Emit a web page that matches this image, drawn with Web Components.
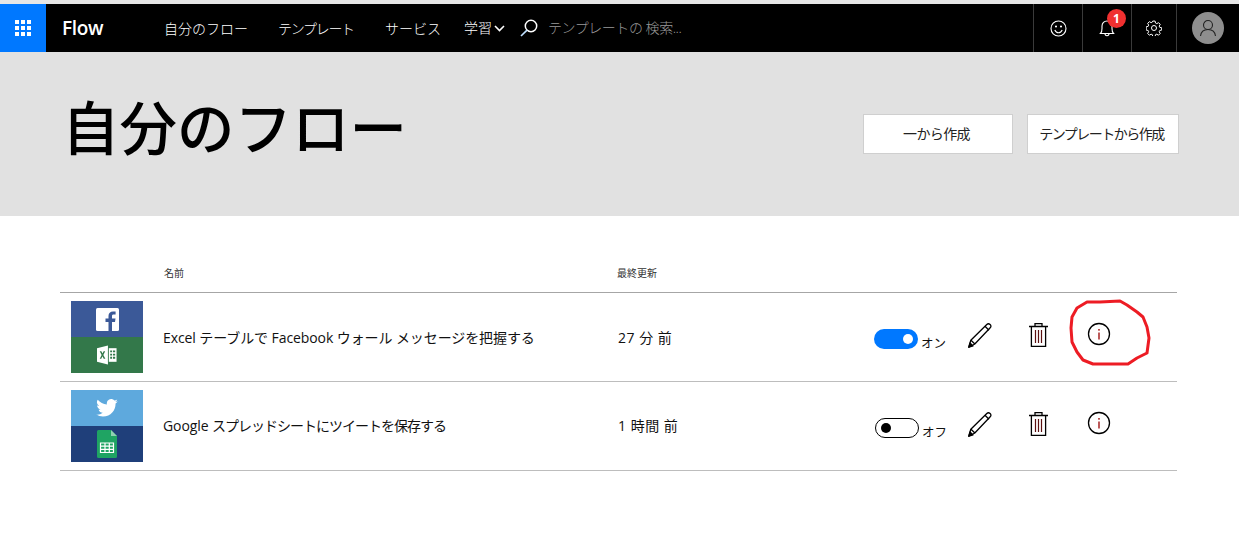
<!DOCTYPE html>
<html lang="ja"><head><meta charset="utf-8"><title>Flow</title>
<style>
html,body{margin:0;padding:0;background:#fff;font-family:"Open Sans","Noto Sans CJK JP",sans-serif;color:#000;overflow:hidden}
body{height:539px;position:relative}
</style></head><body>
<flow-nav></flow-nav>
<flow-hero heading="自分のフロー"></flow-hero>
<flow-list>
  <flow-row name="Excel テーブルで Facebook ウォール メッセージを把握する" time="27 分 前" kind="fb" state="on"></flow-row>
  <flow-row name="Google <span style='letter-spacing:-1px'>スプレッドシートにツイートを保存する</span>" time="1 時間 前" kind="tw" state="off"></flow-row>
</flow-list>
<red-scribble></red-scribble>
<script>
const FONT='"Open Sans","Noto Sans CJK JP",sans-serif';
function def(name,html){customElements.define(name,class extends HTMLElement{connectedCallback(){if(this.shadowRoot)return;const r=this.attachShadow({mode:'open'});r.innerHTML=typeof html==='function'?html(this):html;}});}

def('flow-nav',`<style>
:host{display:flex;height:48px;margin-top:4px;background:#000;color:#fff;align-items:stretch;font:300 14px/50px ${FONT};box-shadow:0 -4px 0 #e6e6e6;white-space:nowrap}
.apps{width:46px;background:#0078ff;display:flex;align-items:center;justify-content:center}
.brand{font:600 19px/49px ${FONT};margin-left:16px;width:102px;letter-spacing:-.3px}
a{display:block}
.m1{width:114px}.m2{width:107px;letter-spacing:-1.3px}.m3{width:79px;}
.m4{display:flex;align-items:center;width:56px;gap:2px}
.search{display:flex;align-items:center;width:513px;color:#9a9a9a;letter-spacing:-.45px}
.search svg{margin-right:10px}
.cell{display:flex;align-items:center;justify-content:center;border-left:1px solid #3a3a3a;box-sizing:border-box;position:relative}
.c1{width:49px}.c2{width:49px}.c3{width:45px}.c4{flex:1}
.badge{position:absolute;left:24px;top:5px;width:19px;height:19px;border-radius:50%;background:#f03030;font:700 12px/19px "Open Sans",sans-serif;text-align:center;color:#fff}
.av{width:32px;height:32px;border-radius:50%;background:#8e8e8e;display:flex;align-items:center;justify-content:center}
</style>
<div class="apps"><svg width="16" height="16" viewBox="0 0 16 16" fill="#fff"><path d="M0 0h4v4H0zM6 0h4v4H6zM12 0h4v4h-4zM0 6h4v4H0zM6 6h4v4H6zM12 6h4v4h-4zM0 12h4v4H0zM6 12h4v4H6zM12 12h4v4h-4z"/></svg></div>
<div class="brand">Flow</div>
<a class="m1">自分のフロー</a><a class="m2">テンプレート</a><a class="m3">サービス</a>
<a class="m4">学習<svg width="11" height="7" viewBox="0 0 11 7" fill="none" stroke="#fff" stroke-width="1.6"><path d="M1 1l4.500 4.500L10 1"/></svg></a>
<div class="search"><svg width="18" height="18" viewBox="0 0 18 18" fill="none" stroke="#fff" stroke-width="1.5"><circle cx="11" cy="7" r="5.700"/><path d="M7 11.200L1 17" stroke="#bfe0ff" stroke-width="1.700"/></svg>テンプレートの 検索...</div>
<div class="cell c1"><svg width="17" height="17" viewBox="0 0 17 17" fill="none" stroke="#fff" stroke-width="1.100"><circle cx="8.500" cy="8.500" r="7.500"/><path d="M4.800 10c.8 1.900 2.100 2.800 3.700 2.800s2.900-.9 3.700-2.800"/><circle cx="6" cy="6.500" r=".5" fill="#fff"/><circle cx="11" cy="6.500" r=".5" fill="#fff"/></svg></div>
<div class="cell c2"><svg width="16" height="18" viewBox="0 0 16 18" fill="none" stroke="#fff" stroke-width="1.100"><path d="M1.500 14.500c1.300-1.200 1.500-2.500 1.500-5V7a5 5 0 0 1 10 0v2.500c0 2.500.2 3.800 1.500 5z"/><path d="M6 14.500c0 3 4 3 4 0"/></svg><span class="badge">1</span></div>
<div class="cell c3"><svg width="16" height="16" viewBox="0 0 16 16" fill="none" stroke="#fff" stroke-width="1"><circle cx="8" cy="8" r="2.500"/><path d="M6.800 1h2.400l.4 2 1.300.6 1.800-1 1.700 1.700-1 1.800.5 1.300 2 .4v2.400l-2 .4-.5 1.300 1 1.800-1.700 1.700-1.800-1-1.300.5-.4 2H6.800l-.4-2-1.300-.5-1.800 1-1.700-1.700 1-1.800-.5-1.300-2-.4V6.800l2-.4.500-1.300-1-1.800L3.300 1.600l1.800 1 1.300-.6z" transform="translate(.1 .1) scale(.98)"/></svg></div>
<div class="cell c4"><div class="av"><svg width="18" height="18" viewBox="0 0 18 18" fill="none" stroke="#222" stroke-width="1.100"><circle cx="9" cy="6" r="4.500"/><path d="M1.500 17c.5-4.500 3.500-6.500 7.500-6.500s7 2 7.500 6.500"/></svg></div></div>`);

def('flow-hero',h=>`<style>
:host{display:flex;height:164px;background:#e1e1e1;box-sizing:border-box;padding:62px 60px 0 62px;justify-content:space-between;align-items:flex-start}
h1{margin:-26px 0 0;font:500 57.5px/80px ${FONT};color:#000}
.btns{display:flex;gap:14px}
</style><h1>${h.getAttribute('heading')}</h1><div class="btns"><flow-button w="150" ls="-.6">一から作成</flow-button><flow-button w="152" ls="-1.5">テンプレートから作成</flow-button></div>`);

def('flow-button',h=>`<style>
:host{display:block;box-sizing:border-box;height:40px;width:${h.getAttribute('w')}px;padding-right:3px;background:#fff;border:1px solid #cfcfcf;font:400 14px/38px ${FONT};letter-spacing:${h.getAttribute('ls')}px;text-align:center;color:#222;white-space:nowrap}
</style><slot></slot>`);

def('flow-list',`<style>
:host{display:block;margin:46px 62px 0 60px}
.head{display:grid;grid-template-columns:104px 453px 1fr;height:30px;border-bottom:1px solid #a6a6a6;font:400 10px/22px ${FONT};color:#333}
</style><div class="head"><span></span><span>名前</span><span>最終更新</span></div><slot></slot>`);

const ICONS={
fb:`<div style="height:36px;background:#3b5998;display:flex;align-items:center;justify-content:center"><svg width="23" height="23" viewBox="0 0 23 23"><rect width="23" height="23" rx="1.500" fill="#fff"/><path d="M16 23v-9h3l.5-3.500H16V8.300c0-1 .3-1.700 1.800-1.700h1.800V3.500c-.4 0-1.400-.1-2.600-.1-2.700 0-4.500 1.600-4.500 4.600v2.500H9.500V14h3v9z" fill="#3b5998"/></svg></div>
<div style="height:36px;background:#33784a;display:flex;align-items:center;justify-content:center"><svg width="20" height="20" viewBox="0 0 22 21"><path d="M0 3l12-3v21L0 18z" fill="#fff"/><path d="M13 3h8.500v15H13z" fill="#fff"/><path d="M14.500 5.500h2v2h-2zM17.500 5.500h2.500v2h-2.500zM14.500 9h2v2h-2zM17.500 9h2.500v2h-2.500zM14.500 12.500h2v2h-2zM17.500 12.500h2.500v2h-2.500z" fill="#33784a"/><path d="M3 6.500h1.800l1.200 2.300 1.300-2.300h1.700L7 10.500l2.200 4H7.400L6 12l-1.300 2.500H3l2.100-4z" fill="#33784a"/></svg></div>`,
tw:`<div style="height:36px;background:#5ea9dd;display:flex;align-items:center;justify-content:center"><svg width="22" height="18" viewBox="0 0 24 20"><path fill="#fff" d="M24 2.400c-.9.400-1.800.7-2.800.8 1-.6 1.800-1.600 2.200-2.700-1 .6-2 1-3.100 1.200A4.900 4.900 0 0 0 11.900 6.100C7.800 5.900 4.200 3.900 1.700.9a4.900 4.900 0 0 0 1.500 6.600c-.8 0-1.600-.2-2.200-.6 0 2.400 1.700 4.400 3.900 4.900-.7.200-1.500.2-2.200.1.600 2 2.400 3.400 4.600 3.400A9.900 9.900 0 0 1 0 17.300 13.900 13.900 0 0 0 7.500 19.500c9.100 0 14.300-7.700 14-14.600 1-.7 1.800-1.500 2.500-2.500z"/></svg></div>
<div style="height:36px;background:#1f3f7a;display:flex;align-items:center;justify-content:center;"><svg width="20" height="28" viewBox="0 0 20 28"><path d="M1.500 0H14l6 6v20.500a1.500 1.500 0 0 1-1.500 1.500h-17A1.500 1.500 0 0 1 0 26.500v-25A1.500 1.500 0 0 1 1.500 0z" fill="#1fa463"/><path d="M14 0l6 6h-6z" fill="#8ed1b1"/><path d="M3.500 13h13v9.500h-13zM3.500 16.200h13M3.500 19.400h13M8 13v9.500M12.300 13v9.500" fill="none" stroke="#fff" stroke-width="1.200"/></svg></div>`};

const PENCIL=`<svg width="24" height="25" viewBox="0 0 24 25" fill="none" stroke="#000" stroke-width="1.300" stroke-linejoin="round"><path d="M.8 24.200l2-7L18.800 1.500c1-1 2.200-1 3.300 0s1.100 2.300.1 3.300L6.800 21z"/><path d="M.8 24.200L2 19.900l3 3z" fill="#000"/><path d="M17 3.300l4 4M3 17.200l3.900 3.800"/></svg>`;
const TRASH=`<svg width="19" height="24" viewBox="0 0 19 24" fill="none" stroke="#000" stroke-width="1.300"><path d="M0 3.500h19M6 3.500V.7h7v2.800M2.400 3.500v19.800h14.200V3.500"/><path d="M6.500 7v13M9.500 7v13M12.500 7v13" stroke="#5a1010" stroke-width="1.200"/></svg>`;
const INFO=`<svg width="24" height="24" viewBox="0 0 24 24" fill="none"><circle cx="12" cy="12" r="10.500" stroke="#000" stroke-width="1.300"/><path d="M12 10.500v7" stroke="#900" stroke-width="1.300"/><circle cx="12" cy="7.800" r=".9" fill="#900"/></svg>`;

def('flow-row',h=>`<style>
:host{display:grid;grid-template-columns:103px 455px 256px 94px 61px 58px 1fr;height:88px;border-bottom:1px solid #bdbdbd;align-items:center;font:400 14px/20px ${FONT};color:#111;white-space:nowrap}
.thumb{width:72px;height:72px;margin-left:11px;overflow:hidden}
.cell{display:flex;align-items:center;height:24px;margin-top:-4px}
.cell.i{margin-top:-6px}
.time{letter-spacing:.5px;${h.getAttribute('state')==='on'?'padding-top:2px':''}}
.name{letter-spacing:-.09px;${h.getAttribute('state')==='on'?'padding-top:2px':''}}
</style><div class="thumb">${ICONS[h.getAttribute('kind')]}</div><div class="name">${h.getAttribute('name')}</div><div class="time">${h.getAttribute('time')}</div>
<flow-toggle state="${h.getAttribute('state')}"></flow-toggle><div class="cell">${PENCIL}</div><div class="cell">${TRASH}</div><div class="cell i">${INFO}</div>`);

def('flow-toggle',h=>{const on=h.getAttribute('state')==='on';return `<style>
:host{display:flex;align-items:flex-end;gap:3px;font:400 12.5px/14px ${FONT};color:#111;padding-top:4px}
.t{box-sizing:border-box;width:44px;height:20px;border-radius:10px;display:flex;align-items:center;position:relative;${on?'background:#0078ff;justify-content:flex-end;padding:0 5px':'border:1px solid #000;margin-left:1px;padding:0 5px'}}
.k{width:10px;height:10px;border-radius:50%;background:${on?'#fff':'#000'}}
span{margin-bottom:-2px}
</style><div class="t"><div class="k"></div></div><span>${on?'オン':'オフ'}</span>`});

def('red-scribble',`<style>:host{position:absolute;left:1066px;top:296px;width:90px;height:74px;pointer-events:none}</style>
<svg width="90" height="74" viewBox="1066 296 90 74" fill="none" stroke="#ed1c24" stroke-width="3" stroke-linejoin="round" stroke-linecap="round"><path d="M1087 302L1100 302 1120 301 1127 305 1137 312 1143 317 1147 327 1149 338 1147 353 1137 358 1128 364 1108 364 1093 364 1083 360 1077 352 1072 342 1071 328 1072 317 1077 308z"/></svg>`);
</script>
</body></html>
